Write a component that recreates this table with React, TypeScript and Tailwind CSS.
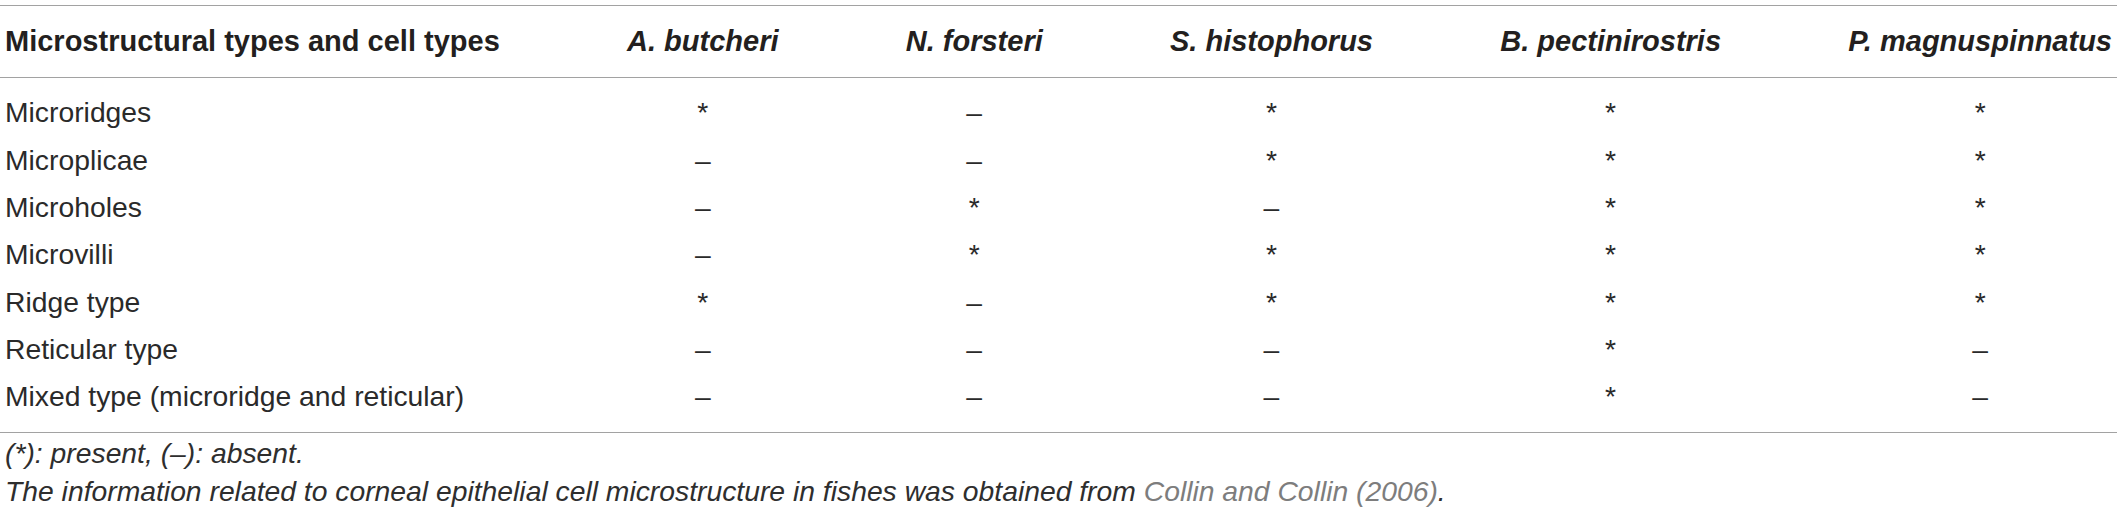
const species = ['A. butcheri', 'N. forsteri', 'S. histophorus', 'B. pectinirostris', 'P. magnuspinnatus']

// '*' = present, '–' = absent
const rows: [string, string[]][] = [
  ['Microridges', ['*', '–', '*', '*', '*']],
  ['Microplicae', ['–', '–', '*', '*', '*']],
  ['Microholes', ['–', '*', '–', '*', '*']],
  ['Microvilli', ['–', '*', '*', '*', '*']],
  ['Ridge type', ['*', '–', '*', '*', '*']],
  ['Reticular type', ['–', '–', '–', '*', '–']],
  ['Mixed type (microridge and reticular)', ['–', '–', '–', '*', '–']],
]

const Rule = () => <div className="col-span-6 h-px bg-[#a2a2a2]" />

const Spacer = ({ h }: { h: string }) => <div className={`col-span-6 ${h}`} />

const App = () => {
  return (
    <div className="w-[2117px] h-[518px] bg-white pt-[5px] font-['Liberation_Sans',Arial,Helvetica,sans-serif] text-[#231f20] overflow-hidden">
      <div className="grid grid-cols-[repeat(6,max-content)] justify-between">
        <Rule />

        {/* header */}
        <div className="h-[71px] flex items-center pl-[5px] text-[29px] font-bold">
          Microstructural types and cell types
        </div>
        {species.map((name, i) => (
          <div
            key={name}
            className={`h-[71px] flex items-center justify-center text-[29px] font-bold italic ${i === species.length - 1 ? 'pr-[5px]' : ''}`}
          >
            {name}
          </div>
        ))}

        <Rule />
        <Spacer h="h-[11px]" />

        {rows.map(([label, values]) => (
          <div key={label} className="contents">
            <div className="h-[47.3px] flex items-center pl-[5px] text-[28.3px] text-[#2a2a2a]">{label}</div>
            {values.map((v, i) => (
              <div
                key={i}
                className={`h-[47.3px] flex items-center justify-center text-[28.3px] text-[#2a2a2a] ${i === values.length - 1 ? 'pr-[5px]' : ''}`}
              >
                {v}
              </div>
            ))}
          </div>
        ))}

        <Spacer h="h-[12px]" />
        <Rule />
      </div>

      <div className="pl-[5px] text-[28.3px] italic text-[#2e2e2e]">
        <p className="leading-[26px] mt-[7px]">(*): present, (–): absent.</p>
        <p className="leading-[26px] mt-[12px]">
          The information related to corneal epithelial cell microstructure in fishes was obtained from{' '}
          <span className="text-[#7d7d7d]">Collin and Collin (2006)</span>.
        </p>
      </div>
    </div>
  )
}

export default App
